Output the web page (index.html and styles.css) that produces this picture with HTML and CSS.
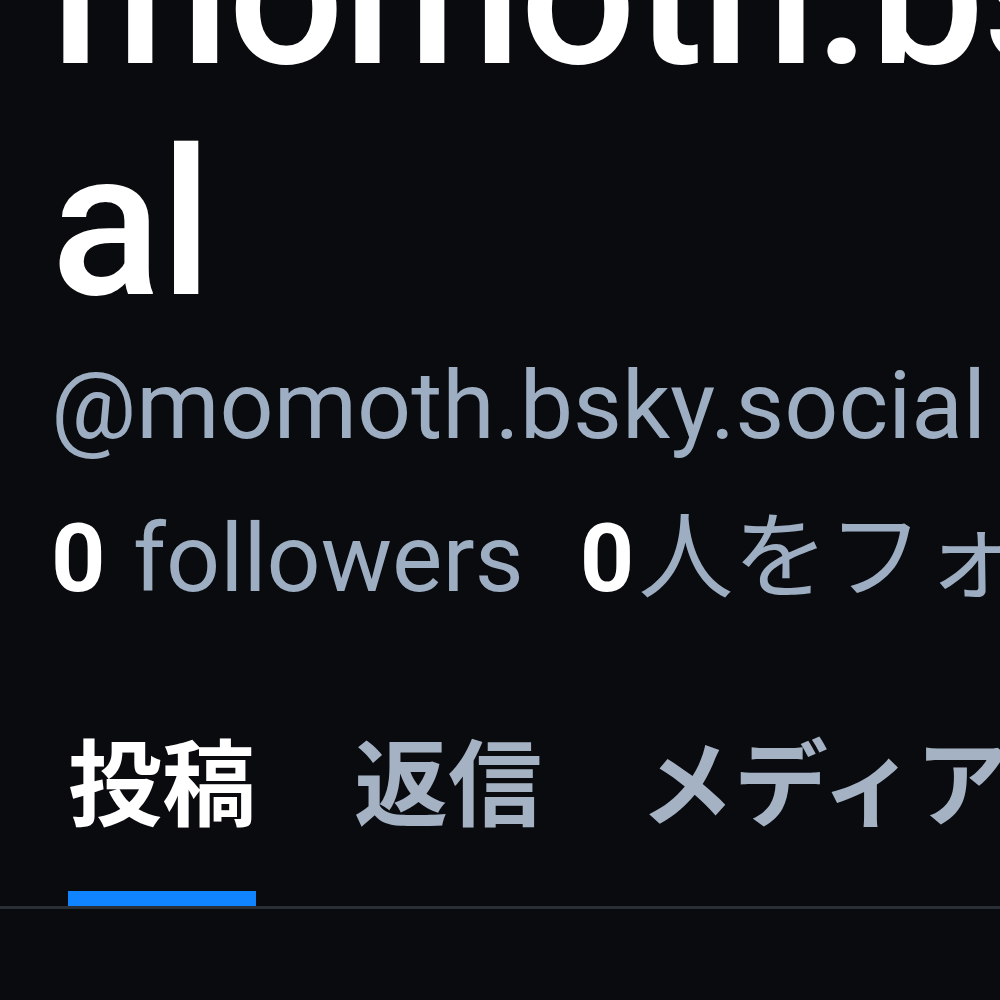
FILE: index.html
```html
<!DOCTYPE html>
<html lang="ja">
<head>
  <meta charset="UTF-8" />
  <meta name="viewport" content="width=device-width, initial-scale=1.0" />
  <title>momoth.bsky.social</title>
  <link rel="stylesheet" href="styles.css">
</head>
<body>
  <div class="profile">
    <div class="profile-info">
      <h1 class="display-name">momoth.bsky.soci<br>al</h1>
      <p class="handle">@momoth.bsky.social</p>
      <div class="stats">
        <span><b>0</b> followers</span>
        <span><b>0</b>人をフォロー中</span>
      </div>
    </div>

    <nav class="tabs">
      <a href="#" class="tab active">投稿</a>
      <a href="#" class="tab">返信</a>
      <a href="#" class="tab">メディア</a>
      <a href="#" class="tab">いいね</a>
    </nav>
  </div>
</body>
</html>
```

FILE: styles.css
```css
* {
  box-sizing: border-box;
}

body {
  margin: 0;
  padding: 0;
  background: #0a0b0e;
  color: #fff;
  font-family: Roboto, "Noto Sans CJK JP", sans-serif;
  overflow: hidden;
}

.profile {
  width: 100%;
  min-height: 100vh;
}

.profile-info {
  padding: 0 0 0 51px;
}

/* name is scrolled half out of view at the top */
.display-name {
  margin: -122px 0 0;
  font-size: 205px;
  font-weight: 500;
  line-height: 231px;
  letter-spacing: -1.5px;
  white-space: nowrap;
}

.handle {
  margin: 9px 0 0;
  font-size: 95px;
  line-height: 113px;
  color: #9dadc2;
  white-space: nowrap;
}

.stats {
  display: flex;
  gap: 56px;
  margin-top: 40px;
  font-size: 95px;
  line-height: 113px;
  color: #9dadc2;
  white-space: nowrap;
}

.stats b {
  color: #fff;
  font-weight: 700;
  margin-right: 4px;
}

.tabs {
  display: flex;
  gap: 98px;
  margin-top: 108px;
  padding-left: 68px;
  border-bottom: 3px solid #2a2f36;
  white-space: nowrap;
}

.tab {
  display: block;
  padding-bottom: 58px;
  border-bottom: 15px solid transparent;
  font-family: "Noto Sans CJK JP", sans-serif;
  font-size: 94px;
  font-weight: 700;
  line-height: 110px;
  color: #a4b2c4;
  text-decoration: none;
}

.tab.active {
  color: #fff;
  border-bottom-color: #1083fe;
}
```
